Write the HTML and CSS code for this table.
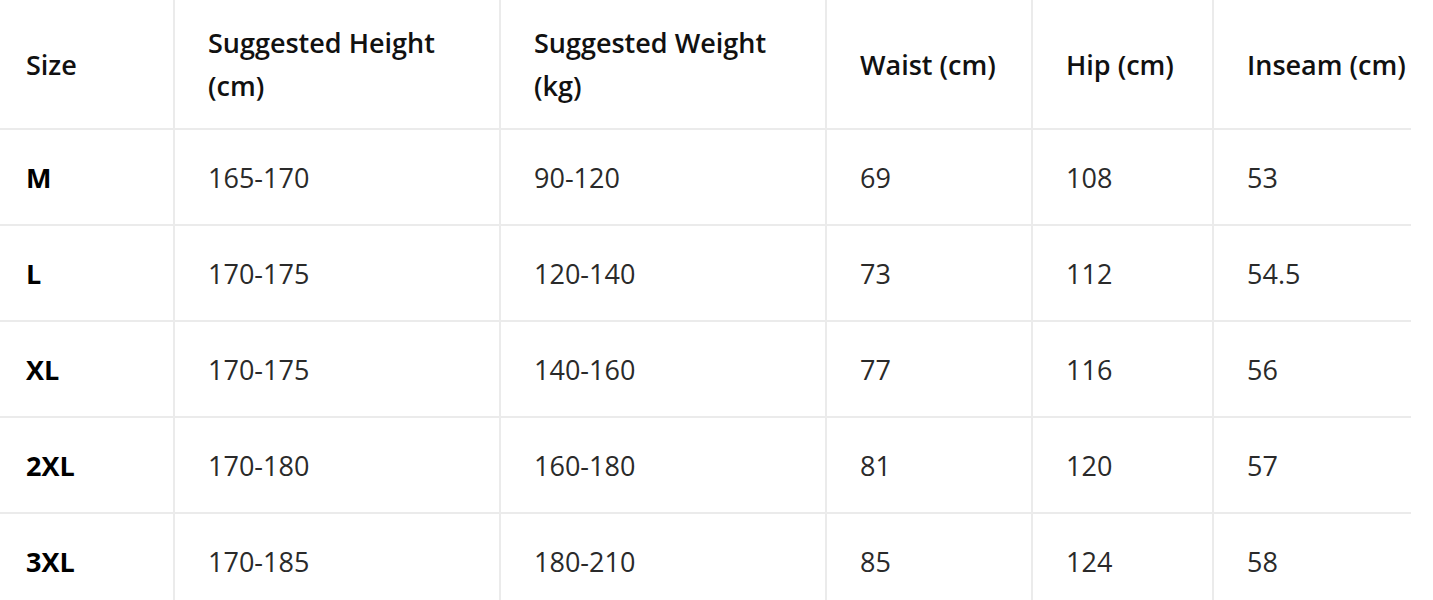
FILE: index.html
```html
<!DOCTYPE html>
<html lang="en">
<head>
<meta charset="utf-8">
<title>Size chart</title>
<link rel="stylesheet" href="styles.css">
</head>
<body>
<table class="size-table">
  <colgroup>
    <col class="c1"><col class="c2"><col class="c3"><col class="c4"><col class="c5"><col class="c6">
  </colgroup>
  <thead>
    <tr>
      <th>Size</th>
      <th>Suggested Height<br>(cm)</th>
      <th>Suggested Weight<br>(kg)</th>
      <th>Waist (cm)</th>
      <th>Hip (cm)</th>
      <th>Inseam (cm)</th>
    </tr>
  </thead>
  <tbody>
    <tr><td class="size">M</td><td>165-170</td><td>90-120</td><td>69</td><td>108</td><td>53</td></tr>
    <tr><td class="size">L</td><td>170-175</td><td>120-140</td><td>73</td><td>112</td><td>54.5</td></tr>
    <tr><td class="size">XL</td><td>170-175</td><td>140-160</td><td>77</td><td>116</td><td>56</td></tr>
    <tr><td class="size">2XL</td><td>170-180</td><td>160-180</td><td>81</td><td>120</td><td>57</td></tr>
    <tr><td class="size">3XL</td><td>170-185</td><td>180-210</td><td>85</td><td>124</td><td>58</td></tr>
  </tbody>
</table>
</body>
</html>
```
FILE: styles.css
```css
html, body {
  margin: 0;
  padding: 0;
  background: #ffffff;
}
body {
  font-family: "Open Sans", "Noto Sans", sans-serif;
  overflow: hidden;
}
.size-table {
  width: 1411px;
  border-collapse: collapse;
  table-layout: fixed;
}
.c1 { width: 174px; }
.c2 { width: 326px; }
.c3 { width: 326px; }
.c4 { width: 206px; }
.c5 { width: 181px; }
.c6 { width: 198px; }
.size-table th,
.size-table td {
  text-align: left;
  vertical-align: middle;
  padding: 0 0 0 33px;
  font-size: 27px;
  line-height: 43px;
  white-space: nowrap;
  border-right: 2px solid #ebebeb;
  border-bottom: 2px solid #ebebeb;
}
.size-table th:last-child,
.size-table td:last-child {
  border-right: none;
}
.size-table th:first-child,
.size-table td:first-child {
  padding-left: 26px;
}
.size-table th {
  height: 128px;
  font-weight: 600;
  color: #111111;
}
.size-table td {
  height: 94px;
  font-weight: 400;
  color: #2a2a2a;
}
.size-table td.size {
  font-weight: 700;
  color: #000000;
}
```
